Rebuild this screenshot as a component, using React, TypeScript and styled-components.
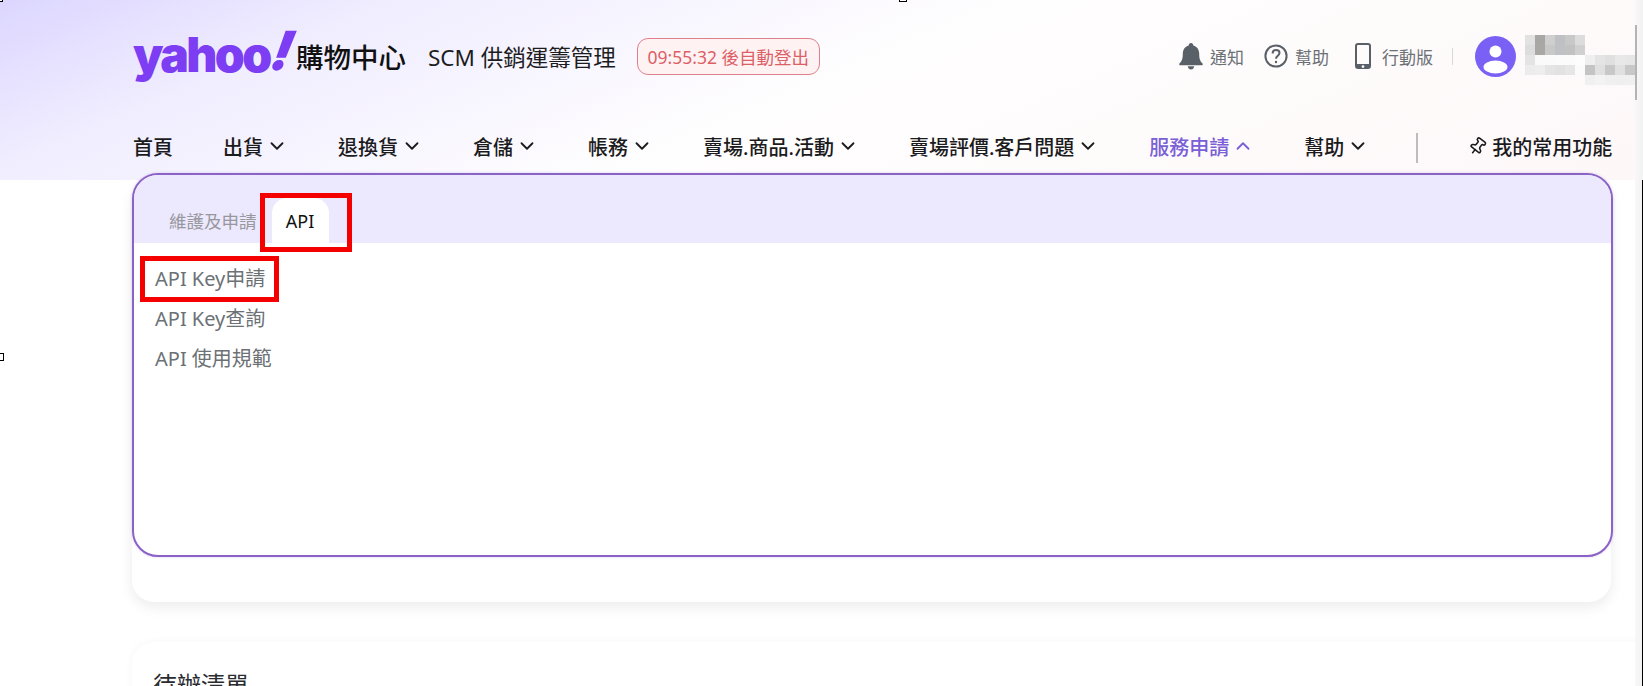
import React from "react";
import styled, { createGlobalStyle } from "styled-components";
import { ChevronDown, ChevronUp, Pin } from "lucide-react";

const GlobalStyle = createGlobalStyle`
  html, body {
    margin: 0;
    height: 100%;
    overflow: hidden;
    background: #fff;
  }
  body {
    font-family: "Noto Sans", "Noto Sans CJK TC", sans-serif;
  }
`;

const Page = styled.div`
  position: relative;
  display: flex;
  width: 1643px;
  height: 686px;
  overflow: hidden;
`;

const Content = styled.div`
  flex: 1;
  min-width: 0;
  background: #fff;
`;

const Header = styled.header`
  height: 180px;
  padding-left: 133px;
  box-sizing: border-box;
  background: linear-gradient(157deg, #dcd6ff 0%, #f0edff 19%, #fffefe 50%, #fdf7f8 100%);
`;

const TopBar = styled.div`
  display: flex;
  align-items: center;
  height: 113px;
`;

const Logo = styled.div`
  display: flex;
  align-items: center;
  width: 273px;
`;

const YahooWord = styled.span`
  font-family: Inter, sans-serif;
  font-size: 48px;
  font-weight: 900;
  letter-spacing: -2.6px;
  line-height: 1;
  color: #7d3df2;
  margin-top: -8px;
`;

const Bang = styled.span`
  display: inline-block;
  font-size: 54px;
  font-style: italic;
  transform: skewX(-12deg) translateY(-2px);
  margin-left: 2px;
`;

const LogoSuffix = styled.span`
  font-size: 27.5px;
  font-weight: 500;
  color: #111;
  line-height: 1;
  margin-left: auto;
  margin-top: 2px;
  white-space: nowrap;
`;

const SystemName = styled.span`
  margin-left: 22px;
  font-size: 22.5px;
  color: #1d1d1f;
  white-space: nowrap;
`;

const Countdown = styled.span`
  margin-left: 21px;
  display: flex;
  align-items: center;
  justify-content: center;
  width: 183px;
  height: 37px;
  box-sizing: border-box;
  border: 1px solid #e0808a;
  border-radius: 11px;
  background: #fff2f3;
  color: #dd5f66;
  font-size: 17.5px;
  white-space: nowrap;
`;

const UserTools = styled.div`
  margin-left: auto;
  display: flex;
  align-items: center;
`;

const ToolLink = styled.span<{ $gap: number; $after: number }>`
  display: flex;
  align-items: center;
  gap: ${(p) => p.$gap}px;
  margin-right: ${(p) => p.$after}px;
  margin-top: -1px;
  font-size: 17px;
  color: #6b7075;
  white-space: nowrap;
`;

const ToolDivider = styled.span`
  width: 1px;
  height: 17px;
  background: #d8d8da;
  margin: 0 22px 0 -2px;
`;

const Avatar = styled.svg`
  width: 41px;
  height: 41px;
  flex: none;
`;

const Mosaic = styled.div`
  display: grid;
  grid-template-columns: repeat(11, 10px);
  grid-auto-rows: 10px;
  margin-left: 9px;
  margin-top: 7px;
`;

const Cell = styled.i<{ $c: string }>`
  display: block;
  background: ${(p) => p.$c};
`;

const NavBar = styled.nav`
  display: flex;
  align-items: center;
  gap: 50px;
  height: 30px;
  margin-top: 18px;
`;

const NavItem = styled.span<{ $active?: boolean }>`
  display: flex;
  align-items: center;
  gap: 3px;
  font-size: 20px;
  font-weight: 500;
  white-space: nowrap;
  color: ${(p) => (p.$active ? "#7a5fd6" : "#1b1b1d")};
`;

const NavDivider = styled.span`
  flex: none;
  width: 2px;
  height: 30px;
  margin: 4px 0 0 -3px;
  background: #bcbcbe;
`;

const Favourites = styled.span`
  display: flex;
  align-items: center;
  gap: 5px;
  font-size: 20px;
  font-weight: 500;
  color: #1b1b1d;
  white-space: nowrap;
`;

const FavouritePin = styled(Pin)`
  transform: rotate(38deg);
`;

const Main = styled.main`
  padding-left: 132px;
`;

const Card = styled.section`
  position: relative;
  width: 1479px;
  height: 422px;
  background: #fff;
  border-radius: 22px;
  box-shadow: 0 5px 14px rgba(0, 0, 0, 0.08);
`;

const Dropdown = styled.div`
  position: absolute;
  top: -7px;
  left: 0;
  width: 1481px;
  height: 384px;
  box-sizing: border-box;
  border: 2px solid #8b62c6;
  border-radius: 26px;
  background: #fff;
  overflow: hidden;
  box-shadow: 0 0 3px rgba(139, 98, 198, 0.3);
`;

const TabBar = styled.div`
  display: flex;
  align-items: flex-end;
  gap: 15px;
  height: 68px;
  padding-left: 35px;
  background: #ece8fd;
`;

const Tab = styled.span<{ $active?: boolean }>`
  position: relative;
  display: flex;
  align-items: center;
  justify-content: center;
  height: 45px;
  font-size: ${(p) => (p.$active ? 18 : 17.5)}px;
  color: ${(p) => (p.$active ? "#111" : "#97979d")};
  width: ${(p) => (p.$active ? "57px" : "auto")};
  background: ${(p) => (p.$active ? "#fff" : "transparent")};
  border-radius: 15px 15px 0 0;
  white-space: nowrap;
`;

const Highlight = styled.span<{ $inset: string }>`
  position: absolute;
  inset: ${(p) => p.$inset};
  border: 5px solid #f50000;
  box-sizing: border-box;
  pointer-events: none;
`;

const MenuList = styled.ul`
  list-style: none;
  margin: 0;
  padding: 16px 0 0 21px;
`;

const MenuItem = styled.li`
  position: relative;
  width: fit-content;
  height: 40px;
  line-height: 40px;
  font-size: 20px;
  color: #6c7176;
  white-space: nowrap;
`;

const TodoCard = styled.section`
  width: 1510px;
  height: 200px;
  margin-top: 40px;
  padding: 24px 0 0 21px;
  border-radius: 22px;
  background: #fff;
  box-shadow: 0 0 8px rgba(0, 0, 0, 0.04);
`;

const TodoTitle = styled.h2`
  margin: 0;
  font-size: 24px;
  font-weight: 400;
  color: #2a2c30;
`;

const ScrollTrack = styled.div`
  flex: none;
  width: 8px;
  background: linear-gradient(90deg, #f8f8f8, #f2f2f2);
`;

const ScrollThumb = styled.div`
  width: 2px;
  height: 75px;
  margin-top: 25px;
  background: #b4b4b6;
`;

const EdgeLine = styled.div`
  position: absolute;
  top: 180px;
  right: 0;
  bottom: 0;
  width: 1px;
  background: #000;
`;

const Handle = styled.span<{ $top: number; $left: number }>`
  position: absolute;
  top: ${(p) => p.$top}px;
  left: ${(p) => p.$left}px;
  width: 8px;
  height: 8px;
  box-sizing: border-box;
  border: 1px solid #000;
  background: #fff;
`;

const BellIcon = () => (
  <svg width="24" height="27" viewBox="0 0 24 27" fill="#5a6068">
    <path d="M12 0c1.4 0 2.3 1 2.3 2.4 3.9 1 5.900 4.300 5.900 8.300 0 5 .8 7.200 3.300 9.800.6.700.2 1.700-.7 1.700H1.200c-.9 0-1.300-1-.7-1.700 2.500-2.600 3.300-4.800 3.300-9.800 0-4 2-7.300 5.900-8.300C9.700 1 10.600 0 12 0z" />
    <path d="M8.700 23.300h6.600c-.4 2-1.700 3.300-3.300 3.300s-2.900-1.300-3.300-3.300z" />
  </svg>
);

const HelpIcon = () => (
  <svg width="24" height="24" viewBox="0 0 24 24" fill="none" stroke="#5a6068">
    <circle cx="12" cy="12" r="10.600" strokeWidth="2" />
    <path d="M8.600 9.400c0-2 1.500-3.300 3.500-3.300s3.400 1.300 3.400 3c0 2.700-3.500 2.800-3.500 5.700" strokeWidth="2" />
    <circle cx="12" cy="18" r="1.200" fill="#5a6068" stroke="none" />
  </svg>
);

const PhoneIcon = () => (
  <svg width="16" height="26" viewBox="0 0 16 26" fill="#5a6068">
    <path
      fillRule="evenodd"
      d="M3 0h10a3 3 0 0 1 3 3v20a3 3 0 0 1-3 3H3a3 3 0 0 1-3-3V3a3 3 0 0 1 3-3zM2 3v18h12V3a1 1 0 0 0-1-1H3a1 1 0 0 0-1 1zm6 19.200a1.400 1.400 0 1 0 0 2.800 1.400 1.400 0 0 0 0-2.800z"
    />
  </svg>
);

const mosaicRows = [
  ["#e2e2e2", "#a9a7a3", "#cfcfcf", "#bfc0c4", "#c8c8c8", "#dcdcdc", "transparent", "transparent", "transparent", "transparent", "transparent"],
  ["#dddddd", "#aaa8a5", "#c8c8c8", "#c0c1c5", "#c2c2c2", "#cfd0cf", "transparent", "transparent", "transparent", "transparent", "transparent"],
  ["#e4e4e4", "#fafafa", "#fafafa", "#fbfbfb", "#fbfbfb", "#fdfdfd", "#efefef", "#e4e4e4", "#e0e0e0", "#e8e8e8", "#e6e6e6"],
  ["#ececec", "#eeeeee", "#e5e5e5", "#e2e2e2", "#e6e6e6", "#fbfbfb", "#c4c4c4", "#e0e0e0", "#c8c8c8", "#e0e0e0", "#c8c8c8"],
  ["transparent", "transparent", "transparent", "transparent", "transparent", "transparent", "#f0f0f0", "#f3f3f3", "#f0f0f0", "#efefef", "#f0f0f0"],
];

const navItems = [
  { label: "出貨" },
  { label: "退換貨" },
  { label: "倉儲" },
  { label: "帳務" },
  { label: "賣場.商品.活動" },
  { label: "賣場評價.客戶問題" },
  { label: "服務申請", active: true },
  { label: "幫助" },
];

export default function App() {
  return (
    <Page>
      <GlobalStyle />
      <Content>
        <Header>
          <TopBar>
            <Logo>
              <YahooWord>
                yahoo<Bang>!</Bang>
              </YahooWord>
              <LogoSuffix>購物中心</LogoSuffix>
            </Logo>
            <SystemName>SCM 供銷運籌管理</SystemName>
            <Countdown>09:55:32 後自動登出</Countdown>
            <UserTools>
              <ToolLink $gap={7} $after={20}>
                <BellIcon />
                通知
              </ToolLink>
              <ToolLink $gap={7} $after={26}>
                <HelpIcon />
                幫助
              </ToolLink>
              <ToolLink $gap={11} $after={21}>
                <PhoneIcon />
                行動版
              </ToolLink>
              <ToolDivider />
              <Avatar viewBox="0 0 41 41">
                <circle cx="20.500" cy="20.500" r="20.500" fill="#7a60f5" />
                <circle cx="20.500" cy="15.500" r="6" fill="#fff" />
                <ellipse cx="20.500" cy="31" rx="12" ry="6.500" fill="#fff" />
              </Avatar>
              <Mosaic>
                {mosaicRows.flat().map((c, i) => (
                  <Cell key={i} $c={c} />
                ))}
              </Mosaic>
            </UserTools>
          </TopBar>
          <NavBar>
            <NavItem>首頁</NavItem>
            {navItems.map((item) => (
              <NavItem key={item.label} $active={item.active}>
                {item.label}
                {item.active ? (
                  <ChevronUp size={22} strokeWidth={2} />
                ) : (
                  <ChevronDown size={22} strokeWidth={2} />
                )}
              </NavItem>
            ))}
            <NavDivider />
            <Favourites>
              <FavouritePin size={19} strokeWidth={2} />
              我的常用功能
            </Favourites>
          </NavBar>
        </Header>
        <Main>
          <Card>
            <Dropdown>
              <TabBar>
                <Tab>維護及申請</Tab>
                <Tab $active>
                  API
                  <Highlight $inset="-5px -23px -9px -12px" />
                </Tab>
              </TabBar>
              <MenuList>
                <MenuItem>
                  API Key申請
                  <Highlight $inset="-3px -14px -3px -15px" />
                </MenuItem>
                <MenuItem>API Key查詢</MenuItem>
                <MenuItem>API 使用規範</MenuItem>
              </MenuList>
            </Dropdown>
          </Card>
          <TodoCard>
            <TodoTitle>待辦清單</TodoTitle>
          </TodoCard>
        </Main>
      </Content>
      <ScrollTrack>
        <ScrollThumb />
      </ScrollTrack>
      <EdgeLine />
      <Handle $top={-6} $left={-5} />
      <Handle $top={-6} $left={899} />
      <Handle $top={353} $left={-4} />
    </Page>
  );
}
